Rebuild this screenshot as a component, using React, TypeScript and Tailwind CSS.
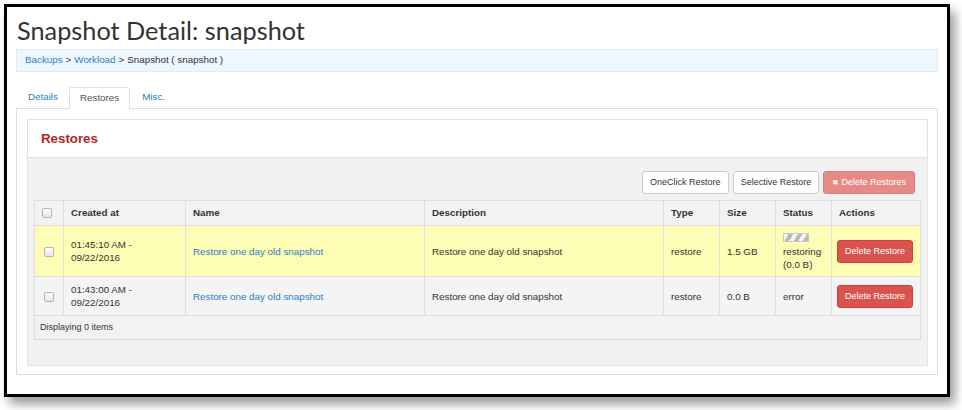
import type { ReactNode } from 'react';

const rows = [
  {
    date: ['01:45:10 AM -', '09/22/2016'],
    name: 'Restore one day old snapshot',
    description: 'Restore one day old snapshot',
    type: 'restore',
    size: '1.5 GB',
    status: 'restoring',
    highlight: true,
  },
  {
    date: ['01:43:00 AM -', '09/22/2016'],
    name: 'Restore one day old snapshot',
    description: 'Restore one day old snapshot',
    type: 'restore',
    size: '0.0 B',
    status: 'error',
    highlight: false,
  },
];

function Checkbox() {
  return (
    <span className="inline-block h-[10px] w-[10px] rounded-[2px] border border-[#b5b5b5] bg-gradient-to-b from-white to-[#e6e6e6] align-middle" />
  );
}

function Th({ children, className = '' }: { children?: ReactNode; className?: string }) {
  return (
    <th className={`border border-[#dedede] px-[7px] text-left font-bold text-[#333] ${className}`}>
      {children}
    </th>
  );
}

function Td({ children, className = '' }: { children?: ReactNode; className?: string }) {
  return <td className={`border border-[#dedede] px-[7px] align-middle ${className}`}>{children}</td>;
}

export default function App() {
  return (
    <div className="min-h-[410px] bg-white pl-[4px] pt-[4px] font-['Liberation_Sans',Arial,sans-serif] text-[9.8px] text-[#333]">
      <div className="h-[393px] w-[946px] border-[3px] border-black bg-white px-[9px] shadow-[5px_7px_10px_rgba(0,0,0,0.4)]">
        <h1 className="pl-[1px] pt-[6px] font-['Lato',sans-serif] text-[25.3px] leading-[34px] font-normal text-[#333]">
          Snapshot Detail: snapshot
        </h1>

        <div className="mt-[2px] flex h-[23px] items-center border border-[#e2ebf1] bg-[#eef7fe] px-[8px]">
          <a className="text-[#2a80c7]">Backups</a>
          <span className="mx-[3px]">&gt;</span>
          <a className="text-[#2a80c7]">Workload</a>
          <span className="mx-[3px]">&gt;</span>
          <span>Snapshot ( snapshot )</span>
        </div>

        {/* tabs */}
        <div className="mt-[15px] flex h-[22px] items-end border-b border-[#dddddd]">
          <a className="ml-[1px] flex h-[21px] items-center px-[11px] text-[#2a80c7]">Details</a>
          <a className="-mb-px flex h-[22px] items-center rounded-t-[3px] border border-b-0 border-[#dddddd] bg-white px-[10px] text-[#555]">
            Restores
          </a>
          <a className="ml-[1px] flex h-[21px] items-center px-[11px] text-[#2a80c7]">Misc.</a>
        </div>

        <div className="h-[266px] border border-t-0 border-[#dddddd] pb-[8px] pl-[10px] pr-[9px] pt-[10px]">
          <div className="flex h-full flex-col border border-[#e3e3e3] bg-[#f1f1f1]">
            <div className="flex h-[38px] items-center border-b border-[#e0e0e0] bg-white px-[13px]">
              <h2 className="text-[13.3px] font-bold text-[#b3261e]">Restores</h2>
            </div>

            <div className="px-[6px] pt-[13px]">
              <div className="mr-[6px] flex justify-end gap-[4px] text-[9px]">
                <button className="h-[23px] rounded-[3px] border border-[#cccccc] bg-white px-[7px] text-[#333]">
                  OneClick Restore
                </button>
                <button className="h-[23px] rounded-[3px] border border-[#cccccc] bg-white px-[7px] text-[#333]">
                  Selective Restore
                </button>
                <button className="flex h-[23px] items-center gap-[3px] rounded-[3px] border border-[#e27c79] bg-[#e78a87] px-[8px] text-white">
                  <span className="font-['DejaVu_Sans',sans-serif] text-[7.5px]">✖</span>
                  Delete Restores
                </button>
              </div>

              <table className="mt-[6px] w-[886px] table-fixed border-collapse border border-[#dddddd]">
                <colgroup>
                  <col className="w-[29px]" />
                  <col className="w-[122px]" />
                  <col className="w-[239px]" />
                  <col className="w-[239px]" />
                  <col className="w-[56px]" />
                  <col className="w-[56px]" />
                  <col className="w-[56px]" />
                  <col className="w-[89px]" />
                </colgroup>
                <thead>
                  <tr className="h-[25px] bg-[#f2f2f2]">
                    <Th className="text-center">
                      <Checkbox />
                    </Th>
                    <Th>Created at</Th>
                    <Th>Name</Th>
                    <Th>Description</Th>
                    <Th>Type</Th>
                    <Th>Size</Th>
                    <Th>Status</Th>
                    <Th>Actions</Th>
                  </tr>
                </thead>
                <tbody className="leading-[13px]">
                  {rows.map((row, i) => (
                    <tr
                      key={i}
                      className={row.highlight ? 'h-[51px] bg-[#fefdb5]' : 'h-[39px] bg-[#f4f4f4]'}
                    >
                      <Td className="text-center">
                        <Checkbox />
                      </Td>
                      <Td>
                        {row.date[0]}
                        <br />
                        {row.date[1]}
                      </Td>
                      <Td>
                        <a className="text-[#2a80c7]">{row.name}</a>
                      </Td>
                      <Td>{row.description}</Td>
                      <Td>{row.type}</Td>
                      <Td>{row.size}</Td>
                      <Td>
                        {row.highlight ? (
                          <div className="pt-[2px]">
                            <div className="mb-[3px] h-[9px] w-[26px] border border-[#c9c9c9] bg-[repeating-linear-gradient(120deg,#f4f4f4_0px,#f4f4f4_4px,#b9b9b9_4px,#b9b9b9_8px)]" />
                            restoring
                            <br />
                            (0.0 B)
                          </div>
                        ) : (
                          row.status
                        )}
                      </Td>
                      <Td className="pl-[5px]">
                        <button className="h-[23px] w-[76px] rounded-[3px] border border-[#d43f3a] bg-[#d9534f] text-[9px] text-white">
                          Delete Restore
                        </button>
                      </Td>
                    </tr>
                  ))}
                  <tr className="h-[24px] bg-[#f2f2f2]">
                    <td colSpan={8} className="border border-[#dddddd] px-[5px] text-[9px]">
                      Displaying 0 items
                    </td>
                  </tr>
                </tbody>
              </table>
            </div>
          </div>
        </div>
      </div>
    </div>
  );
}
